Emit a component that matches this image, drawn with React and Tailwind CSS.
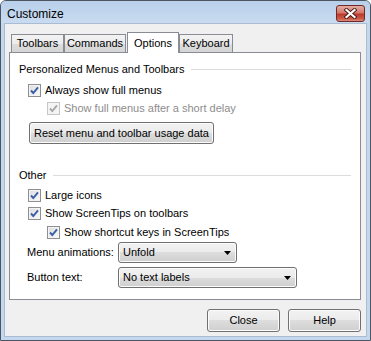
import React from "react";

const CheckBox = ({ disabled }) => {
  return (
    <span
      className={`w-[13px] h-[13px] shrink-0 border flex items-center justify-center ${
        disabled
          ? "border-[#c6c6c6] bg-[#f4f4f4]"
          : "border-[#8e8f8f] bg-[linear-gradient(135deg,#dcdcdc,#fbfbfb)] shadow-[inset_0_0_0_1px_#f4f4f4]"
      }`}
    >
      <svg width="11" height="11" viewBox="0 0 11 11">
        <path
          d="M2 5.5 L4.3 8 L9 2.3"
          fill="none"
          stroke={disabled ? "#a8a8a8" : "#3b5ea8"}
          strokeWidth="1.9"
        />
      </svg>
    </span>
  );
};

const CheckRow = ({ label, indent, disabled }) => {
  return (
    <div className={`flex items-center h-[13px] ${indent ? "pl-[28px]" : "pl-[9px]"}`}>
      <CheckBox disabled={disabled} />
      <span className={`ml-[4px] leading-[13px] ${disabled ? "text-[#8d8d8d]" : ""}`}>
        {label}
      </span>
    </div>
  );
};

const Heading = ({ text }) => {
  return (
    <div className="flex items-center h-[15px]">
      <span className="leading-[15px]">{text}</span>
      <div className="flex-1 h-px bg-[#dcdcdc] ml-[6px]" />
    </div>
  );
};

const btn =
  "border border-[#707070] rounded-[3px] bg-[linear-gradient(#f2f2f2,#ebebeb_50%,#dddddd_50%,#cfcfcf)] shadow-[inset_0_0_0_1px_#fcfcfc]";

const Dropdown = ({ value, width }) => {
  return (
    <div className={`${btn} ${width} h-[21px] flex items-center pl-[4px] pr-[5px]`}>
      <span className="flex-1">{value}</span>
      <svg width="7" height="4" viewBox="0 0 7 4">
        <path d="M0 0 H7 L3.5 4 Z" fill="#000" />
      </svg>
    </div>
  );
};

export default function App() {
  return (
    <div className="w-[371px] h-[341px] font-['Liberation_Sans',Arial,sans-serif] text-[11px] text-black">
      <div className="h-full flex flex-col rounded-t-[6px] border border-[#4d5562] bg-[#c3d7ee] overflow-hidden">
        {/* title bar */}
        <div className="h-[22px] shrink-0 flex items-start pl-[6px] pr-[5px] bg-[linear-gradient(#b9d0ea,#c8dbf0)]">
          <span className="text-[12px] leading-[16px] mt-[5px]">Customize</span>
          <div className="ml-auto mt-[4px] w-[29px] h-[17px] rounded-[3px] border border-[#6e2b25] bg-[linear-gradient(#e5aca2,#d4796c_45%,#bc3a2c_55%,#cc5b48_85%,#dc8d7c)] flex items-center justify-center">
            <svg width="13" height="11" viewBox="0 0 13 11">
              <path d="M2.5 2 L10.5 9 M10.5 2 L2.5 9" stroke="#4a1c17" strokeWidth="4" strokeLinecap="square" />
              <path d="M2.5 2 L10.5 9 M10.5 2 L2.5 9" stroke="#fff" strokeWidth="2.2" strokeLinecap="square" />
            </svg>
          </div>
        </div>

        {/* body */}
        <div className="flex-1 mx-[3px] mb-[3px] bg-[#f0f0f0] border border-[#a9bcd4] flex flex-col pt-[8px] pl-[4px] pr-[5px]">
          {/* tabs */}
          <div className="h-[21px] -mb-px relative z-10 flex items-end pl-[2px]">
            <div className="w-[53px] h-[18px] mb-px border border-b-0 border-[#898c95] bg-[linear-gradient(#f3f3f3,#ebebeb_50%,#dddddd_50%,#d5d5d5)] flex items-center justify-center">
              Toolbars
            </div>
            <div className="w-[62px] h-[18px] mb-px border border-b-0 border-[#898c95] bg-[linear-gradient(#f3f3f3,#ebebeb_50%,#dddddd_50%,#d5d5d5)] flex items-center justify-center">
              Commands
            </div>
            <div className="w-[52px] h-[21px] ml-px border border-b-0 border-[#898c95] bg-white flex items-start justify-center pt-[2px]">
              Options
            </div>
            <div className="w-[54px] h-[18px] mb-px border border-b-0 border-[#898c95] bg-[linear-gradient(#f3f3f3,#ebebeb_50%,#dddddd_50%,#d5d5d5)] flex items-center justify-center">
              Keyboard
            </div>
          </div>

          {/* panel */}
          <div className="h-[248px] shrink-0 border border-[#898c95] bg-white flex flex-col pt-[9px] px-[9px]">
            <Heading text="Personalized Menus and Toolbars" />
            <div className="mt-[7px]">
              <CheckRow label="Always show full menus" />
            </div>
            <div className="mt-[5px]">
              <CheckRow label="Show full menus after a short delay" indent disabled />
            </div>
            <div className="mt-[7px] pl-[10px]">
              <div className={`${btn} w-[185px] h-[22px] flex items-center justify-center`}>
                Reset menu and toolbar usage data
              </div>
            </div>

            <div className="mt-[24px]">
              <Heading text="Other" />
            </div>
            <div className="mt-[6px]">
              <CheckRow label="Large icons" />
            </div>
            <div className="mt-[5px]">
              <CheckRow label="Show ScreenTips on toolbars" />
            </div>
            <div className="mt-[6px]">
              <CheckRow label="Show shortcut keys in ScreenTips" indent />
            </div>
            <div className="mt-[3px] flex items-center">
              <span className="w-[99px] pl-[8px]">Menu animations:</span>
              <Dropdown value="Unfold" width="w-[119px]" />
            </div>
            <div className="mt-[4px] flex items-center">
              <span className="w-[99px] pl-[8px]">Button text:</span>
              <Dropdown value="No text labels" width="w-[179px]" />
            </div>
          </div>

          {/* dialog buttons */}
          <div className="mt-[9px] flex justify-end gap-[8px]">
            <div className={`${btn} w-[73px] h-[23px] flex items-center justify-center`}>Close</div>
            <div className={`${btn} w-[73px] h-[23px] flex items-center justify-center`}>Help</div>
          </div>
        </div>
      </div>
    </div>
  );
}
